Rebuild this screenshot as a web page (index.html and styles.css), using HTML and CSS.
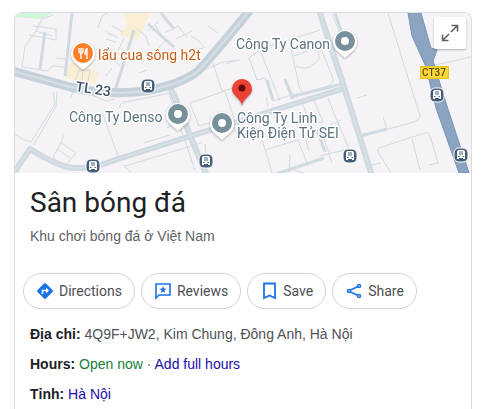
FILE: index.html
```html
<!DOCTYPE html>
<html lang="vi">
<head>
    <title>Sân bóng đá</title>
    <meta charset="utf-8">
    <meta name="viewport" content="width=device-width, initial-scale=1">
    <link rel="stylesheet" href="styles.css">
</head>
<body>
    <div class="card">
        <div class="map">
            <svg class="map-image" viewBox="15 13 456 160" preserveAspectRatio="xMidYMid slice" role="img" aria-label="Map of Sân bóng đá">
                <defs>
                    <g id="pin">
                        <path d="M0 17 L-9 9 A12 12 0 1 1 9 9 Z" fill="#fff"/>
                        <circle r="10"/>
                    </g>
                    <g id="place">
                        <path d="M0 17 L-9 9 A12 12 0 1 1 9 9 Z" fill="#fff"/>
                        <circle r="7" fill="#fff" stroke="#78909c" stroke-width="6"/>
                    </g>
                    <g id="bus">
                        <rect x="-7" y="-7" width="14" height="14" rx="5" fill="#455f78" stroke="#fff"/>
                        <path d="M-4 4 V-3 Q-4 -5 -2 -5 H2 Q4 -5 4 -3 V4 H2 V3 H-2 V4 Z" fill="#fff"/>
                        <path d="M-2 -3 H2 M-2 -1 H2 M-3 1.5 H-1.5 M1.5 1.5 H3" stroke="#455f78" fill="none"/>
                    </g>
                </defs>
                <rect x="15" y="13" width="456" height="160" fill="#f5f3f5"/>
                <!-- areas -->
                <path d="M15 13 H53 L41 19 L15 17 Z" fill="#cdf5d8"/>
                <path d="M70 62 L99 72 L95 84 L65 78 Z M123 13 H151 L137 40 L118 35 L127 25 Z" fill="#faefd4"/>
                <!-- lanes -->
                <g class="lanes">
                    <path d="M53 15 L42 19 L36 31 L25 46 L22 67 L48 71 L52 66 L64 67 M29 35 L41 37 L56 40 L56 29 L33 26 M36 31 L52 36 M44 47 L40 70"/>
                    <path d="M98 28 L102 16 L108 13 M106 31 L111 36 M109 33 L118 38 M106 39 L116 42 M107 48 L125 57 M112 26 L123 32 M124 38 L118 51 M105 56 L115 61 L120 66 M112 68 L106 76"/>
                    <path d="M137 29 L146 36 L149 46 M155 25 L165 41 L158 48 M158 22 L148 31 M165 33 L178 26 L187 37 M176 39 L192 31 M191 36 L198 40 L205 48 M208 26 L218 33 M194 50 L203 48 M139 73 L147 70"/>
                    <path d="M75 82 L79 70 L90 70 L88 82 M83 70 L82 82 M56 58 L65 59"/>
                    <path d="M15 134 L24 140 L31 142 M53 92 L55 104 L31 142 M57 92 L56 106 L34 145"/>
                    <path d="M64 135 L60 145 L53 157 L64 167 L76 153 L60 142 M57 149 L70 158 M102 112 L118 156 M70 99 L73 92 M94 96 L106 101 L115 99"/>
                    <path d="M120 108 Q119 103 125 102 L176 92 L185 119 L167 128 M123 165 L131 172 M125 166 L201 143 M144 143 L170 135 M169 94 L195 170"/>
                    <path d="M190 103 L225 91 L234 118 M190 103 L199 126 L212 122 M188 77 L218 64 L223 62 L240 60 M213 63 L222 91 L237 87 M226 64 L236 60 M205 144 L207 173 M233 124 L239 140"/>
                    <path d="M249 58 L257 80 L265 78 L273 101 M249 58 L260 50 L270 46 L320 30 M260 50 L280 101 M266 97 L268 106 M284 79 L292 99 M273 101 L294 94"/>
                    <path d="M291 48 L299 86 Q301 95 309 92 L328 86 Q334 83 333 78 L319 44 M294 56 L310 50 Q319 49 319 55 Q320 60 314 64 Q306 71 296 66 M357 98 L367 95 M332 14 L348 53"/>
                    <path d="M260 133 L272 173 M265 150 L298 140 L308 166 M290 155 L289 173 M291 169 L304 173 M280 108 L302 102 L315 138 M298 113 L309 151 M314 100 L323 122 L307 125 M328 98 L340 129 M324 139 L332 163 M337 120 L349 149 L320 156 M318 130 L341 120 M273 113 L283 137"/>
                    <path d="M388 13 L420 116 Q420 120 414 122 L363 136 M383 117 L387 129 M427 67 L471 57"/>
                    <path d="M391 173 L378 152 Q377 148 382 147 L425 133 Q429 132 430 136 L438 163 L429 165 M412 139 L420 170 M371 165 L381 163"/>
                </g>
                <g class="streets">
                    <path d="M72 13 L65 76 M134 30 L115 91 M45 32 L40 69 M148 24 L174 47 M161 13 L174 29"/>
                    <path d="M267 80 L273 100 M285 79 L293 99 M290 97 L342 84 M317 130 L325 152 M264 178 L324 158 M360 136 L387 129 M335 13 L349 55"/>
                </g>
                <!-- roads -->
                <g class="road">
                    <path d="M13 174 L30 149 Q59 167 73 168 Q93 169 115 160 L197 134 L240 121 L342 89"/>
                    <path d="M319 10 L345 90 L372 176 M170 87 L207 176"/>
                </g>
                <g class="road-lines">
                    <path d="M13 174 L30 149 Q59 167 73 168 Q93 169 115 160 L197 134 L240 121 L342 89"/>
                    <path d="M319 10 L345 90 L372 176 M170 87 L207 176"/>
                </g>
                <path class="main-road" d="M13 71 L70 87 Q108 96 145 91 Q180 85 198 71 C215 53 232 32 250 10"/>
                <path class="main-line" d="M13 71 L70 87 Q108 96 145 91 Q180 85 198 71 C215 53 232 32 250 10"/>
                <!-- highway -->
                <path d="M408 13 H421 L431 48 L437 50 L433 61 L447 106 L469 173 H459 L436 108 L426 67 L412 36 Z" fill="#8aa4c1" stroke="#7895b4"/>
                <!-- stations -->
                <use href="#bus" x="148" y="86"/>
                <use href="#bus" x="93" y="166"/>
                <use href="#bus" x="206" y="161"/>
                <use href="#bus" x="350" y="156"/>
                <use href="#bus" x="437" y="95"/>
                <use href="#bus" x="461" y="155"/>
                <!-- places -->
                <g class="pins">
                    <use href="#pin" x="83" y="53" fill="#ff7f27"/>
                    <path d="M79 48 V51 Q79 53 81 53 V59 M81 48 V52 M83 48 V51 Q83 53 81 53 M87 59 V49 Q85 50 85 54 H87" fill="none" stroke="#fff" stroke-width="1.4"/>
                    <use href="#place" x="178" y="114"/>
                    <use href="#place" x="222" y="123"/>
                    <use href="#place" x="345" y="41"/>
                    <path d="M242 106 C241 98 232 96 232 89 A10 10 0 0 1 252 89 C252 96 243 98 242 106 Z" fill="#ea4335"/>
                    <circle cx="242" cy="88" r="3.5" fill="#650b0b"/>
                </g>
                <g class="labels">
                    <text class="food" x="98" y="60">lẩu cua sông h2t</text>
                    <text class="route" x="75" y="91" transform="rotate(9 75 91)">TL 23</text>
                    <text x="69" y="122">Công Ty Denso</text>
                    <text x="236" y="49">Công Ty Canon</text>
                    <text x="237" y="123">Công Ty Linh</text>
                    <text x="237" y="138">Kiện Điện Tử SEI</text>
                </g>
                <rect x="420.5" y="66.5" width="28" height="12" fill="#fdd835" stroke="#e8c220"/>
                <text class="shield" x="434" y="76">CT37</text>
            </svg>
            <button class="expand" type="button" aria-label="Expand map">
                <svg width="18" height="18" viewBox="0 0 18 18"><path d="M10 8 L16 2 M10.5 1.5 H16.5 V7.5 M8 10 L2 16 M1.5 10.5 V16.5 H7.5" fill="none" stroke="#5f6368" stroke-width="1.6"/></svg>
            </button>
        </div>
        <div class="header">
            <h1>Sân bóng đá</h1>
            <p class="subtitle">Khu chơi bóng đá ở Việt Nam</p>
        </div>
        <div class="actions">
            <button type="button">
                <svg width="20" height="20" viewBox="0 0 20 20"><path d="M9 2.5 Q10 1.5 11 2.5 L17.5 9 Q18.5 10 17.5 11 L11 17.5 Q10 18.5 9 17.5 L2.5 11 Q1.5 10 2.5 9 Z" fill="#1a73e8"/><path d="M7.5 13 V9.5 H12" fill="none" stroke="#fff" stroke-width="1.6"/><path d="M11 6.5 L14 9.5 L11 12.5 Z" fill="#fff"/></svg>
                Directions
            </button>
            <button type="button">
                <svg width="20" height="20" viewBox="0 0 20 20"><path d="M3 17 V3 H17 V14 H6 Z" fill="none" stroke="#1a73e8" stroke-width="1.6"/><path d="M10 5 L11 7.6 L13.5 7.7 L11.5 9.3 L12.2 12 L10 10.5 L7.8 12 L8.5 9.3 L6.5 7.7 L9 7.6 Z" fill="#1a73e8"/></svg>
                Reviews
            </button>
            <button type="button">
                <svg width="20" height="20" viewBox="0 0 20 20"><path d="M5 17 V2.500 H16 V17 L10.5 14.5 Z" fill="none" stroke="#1a73e8" stroke-width="1.8"/></svg>
                Save
            </button>
            <button type="button">
                <svg width="20" height="20" viewBox="0 0 20 20"><g fill="none" stroke="#1a73e8" stroke-width="1.6"><path d="M6.500 9 L14 5.500 M6.500 11 L14 14.500"/><circle cx="5" cy="10" r="1.500"/><circle cx="15" cy="5" r="1.500"/><circle cx="15" cy="15" r="1.500"/></g></svg>
                Share
            </button>
        </div>
        <div class="details">
            <p><b>Địa chỉ:</b> 4Q9F+JW2, Kim Chung, Đông Anh, Hà Nội</p>
            <p><b>Hours:</b> <span class="open">Open now</span> · <a href="#hours">Add full hours</a></p>
            <p><b>Tỉnh:</b> <a href="#province">Hà Nội</a></p>
        </div>
    </div>
</body>
</html>
```
FILE: styles.css
```css
body {
    margin: 12px 12px 0 14px;
    background-color: #fff;
    color: #4d5156;
    font-family: "Liberation Sans", Arial, sans-serif;
    font-size: 14px;
}
.card {
    border: 1px solid #dadce0;
    border-bottom: none;
    border-radius: 8px 8px 0 0;
    overflow: hidden;
}
.map {
    position: relative;
    height: 160px;
}
.map-image {
    display: block;
    width: 100%;
    height: 100%;
}
.lanes, .streets, .road, .road-lines, .main-road, .main-line {
    fill: none;
    stroke: #d0dae1;
    stroke-linejoin: round;
}
.lanes {
    stroke-width: 1;
}
.streets {
    stroke-width: 3;
}
.road {
    stroke: #cfd9e1;
    stroke-width: 6;
}
.road-lines {
    stroke: #dde4ea;
    stroke-width: 1;
}
.main-road {
    stroke: #c4d0da;
    stroke-width: 9;
}
.main-line {
    stroke: #d8e0e7;
    stroke-width: 2;
}
.pins {
    filter: drop-shadow(0 1px 1px rgba(0, 0, 0, 0.3));
}
.labels {
    font-family: Roboto, sans-serif;
    font-size: 14px;
    fill: #5b7380;
    stroke: #fff;
    stroke-width: 3px;
    stroke-linejoin: round;
    paint-order: stroke;
}
.labels .food {
    fill: #c75b12;
}
.labels .route {
    fill: #3c5064;
    font-weight: 500;
}
.shield {
    font-family: Roboto, sans-serif;
    font-size: 10px;
    font-weight: 500;
    fill: #5c4a10;
    text-anchor: middle;
}
.expand {
    position: absolute;
    top: 4px;
    right: 5px;
    display: flex;
    align-items: center;
    justify-content: center;
    width: 32px;
    height: 32px;
    padding: 0;
    border: none;
    border-radius: 2px;
    background-color: #fff;
    box-shadow: 0 1px 2px rgba(0, 0, 0, 0.3);
    cursor: pointer;
}
.header {
    padding: 12px 15px 0;
}
h1 {
    margin: 0;
    color: #202124;
    font-family: Roboto, sans-serif;
    font-size: 28px;
    font-weight: 400;
    line-height: 36px;
}
.subtitle {
    margin: 5px 0 0;
    color: #5f6368;
    line-height: 20px;
}
.actions {
    display: flex;
    flex-wrap: wrap;
    gap: 6px;
    margin-top: 27px;
    padding: 0 8px;
}
.actions button {
    display: flex;
    align-items: center;
    gap: 4px;
    height: 36px;
    padding: 0 12px 0 11px;
    border: 1px solid #d2d2d2;
    border-radius: 18px;
    background-color: #fff;
    color: #4d5156;
    font-family: Roboto, sans-serif;
    font-size: 14px;
    cursor: pointer;
}
.details {
    padding: 10px 15px 0;
}
.details p {
    margin: 0;
    line-height: 30px;
}
.details b {
    color: #202124;
}
.details a {
    color: #1a0dab;
    text-decoration: none;
}
.open {
    color: #188038;
}
```
